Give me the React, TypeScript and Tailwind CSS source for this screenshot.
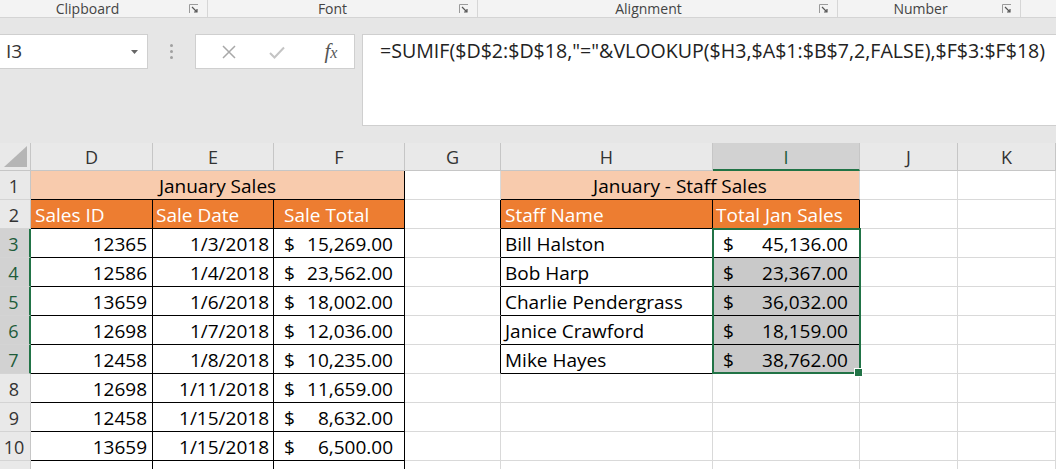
import React from 'react'

const cellFont = "font-['Open_Sans',sans-serif]"
const uiFont = "font-['Open_Sans',sans-serif]"

const sales = [
  ['12365', '1/3/2018', '15,269.00'],
  ['12586', '1/4/2018', '23,562.00'],
  ['13659', '1/6/2018', '18,002.00'],
  ['12698', '1/7/2018', '12,036.00'],
  ['12458', '1/8/2018', '10,235.00'],
  ['12698', '1/11/2018', '11,659.00'],
  ['12458', '1/15/2018', '8,632.00'],
  ['13659', '1/15/2018', '6,500.00'],
  ['12586', '1/16/2018', '9,420.00'],
]

const staff = [
  ['Bill Halston', '45,136.00'],
  ['Bob Harp', '23,367.00'],
  ['Charlie Pendergrass', '36,032.00'],
  ['Janice Crawford', '18,159.00'],
  ['Mike Hayes', '38,762.00'],
]

const columns = ['D', 'E', 'F', 'G', 'H', 'I', 'J', 'K']

interface CellProps {
  children?: React.ReactNode
  className?: string
  rb?: boolean // black right border
  bb?: boolean // black bottom border
}

function Cell({ children, className = '', rb, bb }: CellProps) {
  return (
    <div
      className={`flex h-[29px] min-w-0 items-center overflow-hidden whitespace-nowrap border-r border-b pt-[2px] text-[19px] leading-none text-black ${
        rb ? 'border-r-black' : 'border-r-[#d9d9d9]'
      } ${bb ? 'border-b-black' : 'border-b-[#d9d9d9]'} ${className}`}
    >
      {children}
    </div>
  )
}

function Money({ value, className = '' }: { value: string; className?: string }) {
  return (
    <Cell rb bb className={`justify-between pl-[10px] pr-[11px] ${className}`}>
      <span>$</span>
      <span>{value}</span>
    </Cell>
  )
}

function RowHead({ n, selected }: { n: number; selected?: boolean }) {
  return (
    <div
      className={`flex h-[29px] items-center justify-center border-b border-b-[#d4d4d4] pt-[2px] pr-[2px] text-[18px] leading-none ${
        selected
          ? 'border-r-2 border-r-[#217346] bg-[#d2d2d2] text-[#1e5c3a]'
          : 'border-r border-r-[#c6c6c6] bg-[#e9e9e9] text-[#333]'
      }`}
    >
      {n}
    </div>
  )
}

function Launcher() {
  return (
    <svg width="10" height="10" viewBox="0 0 10 10" className="shrink-0">
      <path d="M0.5 9V0.5H9" fill="none" stroke="#9a9a9a" strokeWidth="1" />
      <path d="M3 3L8 8M8 5V8H5" fill="none" stroke="#555" strokeWidth="1.2" />
    </svg>
  )
}

function RibbonGroup({ label, width, pr }: { label: string; width: string; pr: string }) {
  return (
    <div className={`relative flex h-full items-center justify-center border-r border-r-[#d6d6d6] pt-[1px] ${width} ${pr}`}>
      <span className="text-[14px] leading-[16px] text-[#444]">{label}</span>
      <span className="absolute right-[8px] top-[4px]">
        <Launcher />
      </span>
    </div>
  )
}

export default function App() {
  return (
    <div className={`h-[469px] w-[1056px] overflow-hidden bg-[#e6e6e6] ${uiFont}`}>
      {/* ribbon group labels */}
      <div className="flex h-[18px] items-stretch border-b border-b-[#d4d4d4] bg-[#f3f3f3]">
        <RibbonGroup label="Clipboard" width="w-[208px]" pr="pr-[32px]" />
        <RibbonGroup label="Font" width="w-[270px]" pr="pr-[20px]" />
        <RibbonGroup label="Alignment" width="w-[360px]" pr="pr-[18px]" />
        <RibbonGroup label="Number" width="w-[183px]" pr="pr-[17px]" />
      </div>

      {/* name box and formula bar */}
      <div className="flex items-start pt-[16px]">
        <div className="flex h-[35px] w-[148px] items-center justify-between border border-l-0 border-[#cfcfcf] bg-white pl-[6px] pr-[9px]">
          <span className="text-[19px] text-[#333]">I3</span>
          <svg width="7" height="4" viewBox="0 0 7 4">
            <path d="M0 0H7L3.5 4Z" fill="#666" />
          </svg>
        </div>
        <div className="flex h-[35px] w-[47px] flex-col items-center justify-center gap-[3px]">
          <span className="h-[3px] w-[3px] rounded-full bg-[#a0a0a0]" />
          <span className="h-[3px] w-[3px] rounded-full bg-[#a0a0a0]" />
          <span className="h-[3px] w-[3px] rounded-full bg-[#a0a0a0]" />
        </div>
        <div className="flex h-[35px] w-[160px] items-center border border-[#cfcfcf] bg-white">
          <div className="flex w-[58px] justify-center pl-[8px]">
            <svg width="14" height="14" viewBox="0 0 14 14">
              <path d="M1 1L13 13M13 1L1 13" stroke="#a8a8a8" strokeWidth="1.5" />
            </svg>
          </div>
          <div className="flex w-[46px] justify-center pt-[2px]">
            <svg width="16" height="13" viewBox="0 0 16 13">
              <path d="M1 7L5.5 11.5L15 1.5" fill="none" stroke="#c4c4c4" strokeWidth="2" />
            </svg>
          </div>
          <div className="flex flex-1 justify-center pl-[8px]">
            <span className="font-['Liberation_Serif',serif] text-[21px] italic leading-none text-[#555]">
              f<span className="text-[16px]">x</span>
            </span>
          </div>
        </div>
        <div className="ml-[7px] h-[92px] flex-1 border border-r-0 border-[#cfcfcf] bg-white pl-[17px] pt-[3px]">
          <span className="whitespace-nowrap text-[19.6px] leading-[26px] text-[#222]">
            =SUMIF($D$2:$D$18,"="&amp;VLOOKUP($H3,$A$1:$B$7,2,FALSE),$F$3:$F$18)
          </span>
        </div>
      </div>

      {/* spreadsheet grid */}
      <div className={`relative mt-[17px] bg-white ${cellFont}`}>
        <div className="grid grid-cols-[31px_122px_121px_131px_96px_212px_147px_98px_1fr]">
          {/* column headers */}
          <div className="flex h-[28px] items-end justify-end border-r border-b border-[#c6c6c6] bg-[#e9e9e9] pb-[3px] pr-[3px]">
            <svg width="23" height="21" viewBox="0 0 23 21">
              <path d="M23 0V21H0Z" fill="#b5b5b5" />
            </svg>
          </div>
          {columns.map((c) => (
            <div
              key={c}
              className={`flex h-[28px] items-center justify-center pt-[1px] text-[18px] leading-none ${
                c === 'I'
                  ? 'border-r border-r-[#c6c6c6] border-b-2 border-b-[#217346] bg-[#d2d2d2] text-[#1e5c3a]'
                  : 'border-r border-b border-[#c6c6c6] bg-[#e9e9e9] text-[#333]'
              }`}
            >
              {c}
            </div>
          ))}

          {/* row 1 */}
          <RowHead n={1} />
          <Cell bb rb className="col-span-3 justify-center bg-[#f8cbad]">
            January Sales
          </Cell>
          <Cell />
          <Cell bb className="col-span-2 justify-center bg-[#f8cbad]">
            January - Staff Sales
          </Cell>
          <Cell />
          <Cell />

          {/* row 2 */}
          <RowHead n={2} />
          <Cell rb bb className="bg-[#ed7d31] pl-[4px] text-white">Sales ID</Cell>
          <Cell rb bb className="bg-[#ed7d31] pl-[3px] text-white">Sale Date</Cell>
          <Cell rb bb className="bg-[#ed7d31] pl-[10px] text-white">Sale Total</Cell>
          <Cell rb />
          <Cell rb bb className="bg-[#ed7d31] pl-[4px] text-white">Staff Name</Cell>
          <Cell rb bb className="bg-[#ed7d31] pl-[3px] text-white">Total Jan Sales</Cell>
          <Cell />
          <Cell />

          {/* data rows */}
          {sales.map((s, i) => {
            const row = i + 3
            const st = staff[i]
            return (
              <React.Fragment key={row}>
                <RowHead n={row} selected={row <= 7} />
                <Cell rb bb className="justify-end pr-[5px]">{s[0]}</Cell>
                <Cell rb bb className="justify-end pr-[4px]">{s[1]}</Cell>
                <Money value={s[2]} />
                <Cell rb={!!st} />
                {st ? (
                  <>
                    <Cell rb bb className="pl-[4px]">{st[0]}</Cell>
                    <Money value={st[1]} className={row === 3 ? '' : 'bg-[#c9c9c9]'} />
                  </>
                ) : (
                  <>
                    <Cell />
                    <Cell />
                  </>
                )}
                <Cell />
                <Cell />
              </React.Fragment>
            )
          })}
        </div>

        {/* selection I3:I7 */}
        <div className="pointer-events-none absolute left-[712px] top-[85px] h-[146px] w-[149px] border-2 border-[#217346]" />
        <div className="pointer-events-none absolute left-[855px] top-[226px] h-[7px] w-[7px] bg-[#217346] outline outline-1 outline-white" />
      </div>
    </div>
  )
}
